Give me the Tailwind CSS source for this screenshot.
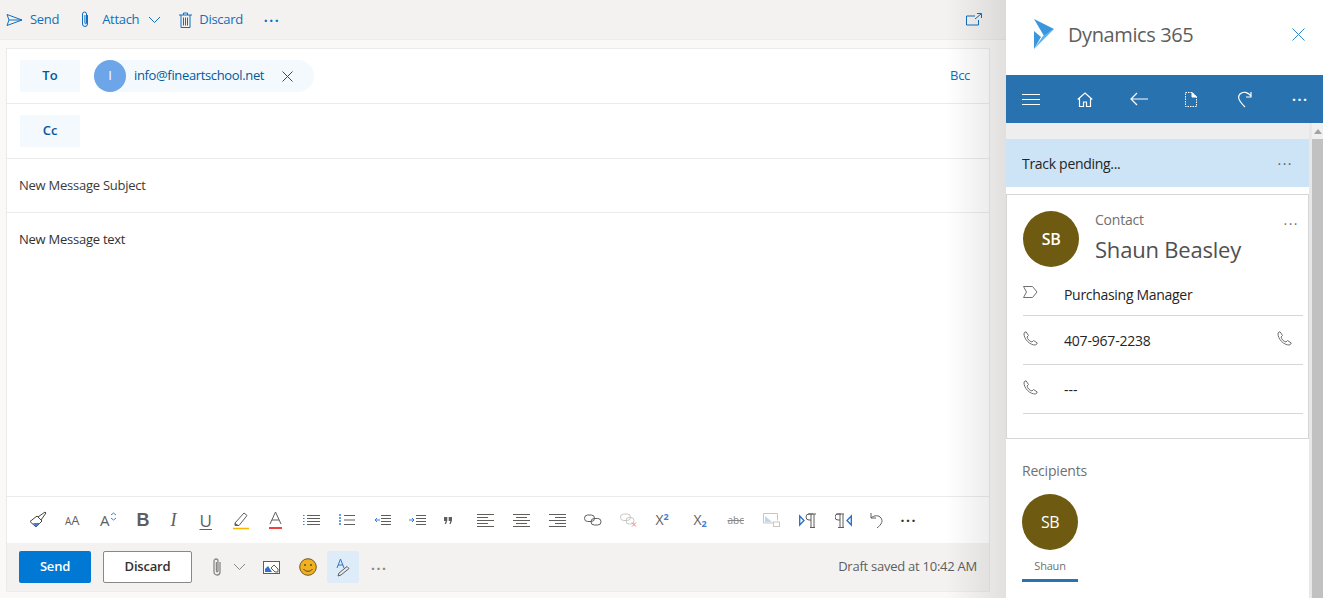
<!DOCTYPE html>
<html lang="en">
  <head>
    <meta charset="UTF-8" />
    <title>New Message</title>
    <script src="https://cdn.jsdelivr.net/npm/@tailwindcss/browser@4"></script>
  </head>
  <body class="h-[598px] overflow-hidden bg-white font-['Open_Sans',sans-serif] text-[13px] text-[#323130]">
    <div class="flex h-[598px]">
      <!-- compose pane -->
      <div class="relative w-[1006px] shrink-0 bg-[#faf9f8]">
        <div class="flex h-[40px] items-center border-b border-[#edebe9] bg-[#f3f2f1] pl-[6px] pr-[24px] text-[#106ebe]">
          <svg class="w-[17px] h-[14px]" viewBox="0 0 17 14" fill="none" stroke="#106ebe"><path d="M1 1.5 16 7 1 12.5 3 7ZM3 7h13"/></svg>
          <span class="ml-[7px] tracking-[-0.3px]">Send</span>
          <svg class="ml-[21px] w-[10px] h-[17px]" viewBox="0 0 10 17" fill="none" stroke="#106ebe"><path d="M7.5 4v9a2.5 2.5 0 0 1-5 0V3a2 2 0 0 1 4 0v9a.8.8 0 0 1-1.6 0V4"/></svg>
          <span class="ml-[12px] tracking-[-0.3px]">Attach</span>
          <svg class="ml-[9px] w-[13px] h-[8px]" viewBox="0 0 13 8" fill="none" stroke="#106ebe"><path d="m1 1 5.500 5.500L12 1"/></svg>
          <svg class="ml-[18px] w-[13px] h-[16px]" viewBox="0 0 13 16" fill="none" stroke="#106ebe"><path d="M0 3h13M4.500 3V1h4v2M2 3v12.500h9V3M4.500 5.500v8M6.500 5.500v8M8.500 5.500v8"/></svg>
          <span class="ml-[7px] tracking-[-0.3px]">Discard</span>
          <span class="ml-[21px] text-[14px] font-bold tracking-[1.5px] -mt-[6px]">...</span>
          <svg class="ml-auto w-[16px] h-[13px]" viewBox="0 0 16 13" fill="none" stroke="#106ebe"><path d="M9 3H.5v9h12V7"/><path d="M9 6l6-5M11 .5h4.500V5"/></svg>
        </div>

        <div class="ml-[6px] mt-[8px] w-[984px] border border-[#edebe9] bg-white">
          <div class="flex h-[55px] items-center border-b border-[#edebe9] pl-[13px] pr-[19px]">
            <div class="flex h-[32px] w-[60px] items-center justify-center rounded-[2px] bg-[#f3f9fd] font-semibold text-[#005a9e]">To</div>
            <div class="ml-[14px] flex h-[32px] w-[220px] items-center rounded-full bg-[#f3f9fd] text-[#005a9e]">
              <div class="flex h-[32px] w-[32px] items-center justify-center rounded-full bg-[#6ca5e8] text-white">I</div>
              <span class="ml-[8px] tracking-[-0.35px]">info@fineartschool.net</span>
              <svg class="ml-[18px] w-[11px] h-[11px]" viewBox="0 0 11 11" stroke="#005a9e"><path d="m.5.500 10 10M10.500.500l-10 10"/></svg>
            </div>
            <span class="ml-auto text-[#106ebe] tracking-[-0.3px]">Bcc</span>
          </div>
          <div class="flex h-[55px] items-center border-b border-[#edebe9] pl-[13px]">
            <div class="flex h-[32px] w-[60px] items-center justify-center rounded-[2px] bg-[#f3f9fd] font-semibold text-[#005a9e]">Cc</div>
          </div>
          <div class="flex h-[54px] items-center border-b border-[#edebe9] pl-[12px] tracking-[-0.25px] text-[#3b3a39]">New Message Subject</div>
          <div class="h-[283px] pl-[12px] pt-[17px] tracking-[-0.25px]">New Message text</div>

          <!-- format toolbar -->
          <div class="flex h-[47px] items-center border-t border-[#edebe9] pl-[22px] text-[#605e5c]">
            <svg class="w-[18px] h-[18px]" viewBox="0 0 18 18" fill="none" stroke="#444"><path d="M1 10.500 7 16l6-6-5-5Z"/><path d="M4 12h7l-4 4Z" fill="#3b7dd8" stroke="none"/><path d="m9 6 7-5 1 1-5 7"/></svg>
            <span class="ml-[18px] w-[16px] text-[10px] leading-none">A<span class="text-[13px]">A</span></span>
            <span class="ml-[19px] text-[15px] leading-none">A</span>
            <svg class="w-[7px] h-[9px] -mt-[8px]" viewBox="0 0 7 9" fill="none" stroke="#3b7dd8"><path d="m1 3 2.500-2L6 3M1 6l2.500 2L6 6"/></svg>
            <span class="ml-[20px] w-[12px] text-[18px] font-bold leading-none font-['Liberation_Sans']">B</span>
            <span class="ml-[22px] w-[12px] text-[18px] italic leading-none font-['Liberation_Serif']">I</span>
            <span class="ml-[17px] w-[12px] text-[17px] leading-none underline underline-offset-2">U</span>
            <svg class="ml-[20px] w-[17px] h-[19px]" viewBox="0 0 17 19" fill="none"><path d="M3 12 12 2l3 2.500-8 10H3Z" stroke="#605e5c"/><path d="M3 12l4 2.500H3Z" fill="#605e5c"/><path d="M1 17.500h16" stroke="#f7b500" stroke-width="1.500"/></svg>
            <svg class="ml-[20px] w-[13px] h-[18px]" viewBox="0 0 13 18" fill="none"><path d="m1 13 5.500-12L12 13M3 9h7" stroke="#605e5c"/><path d="M0 17h13" stroke="#e00" stroke-width="1.500"/></svg>
            <svg class="ml-[21px] w-[17px] h-[11px]" viewBox="0 0 17 11" stroke="#605e5c"><path d="M4 .500h13M4 3.500h13M4 6.500h13M4 9.500h13"/><path d="M0 .500h1.500M0 3.500h1.500M0 6.500h1.500M0 9.500h1.500" stroke="#3b7dd8"/></svg>
            <svg class="ml-[19px] w-[16px] h-[12px]" viewBox="0 0 16 12" stroke="#605e5c"><path d="M5 1.500h11M5 6h11M5 10.500h11"/><path d="M1 0v12" stroke="#3b7dd8" stroke-dasharray="2 1" stroke-width="1.500"/></svg>
            <svg class="ml-[19px] w-[17px] h-[10px]" viewBox="0 0 17 10" fill="none" stroke="#605e5c"><path d="M7 .500h10M7 3.500h10M7 6.500h10M7 9.500h10"/><path d="M6 5H1m2-2L1 5l2 2" stroke="#2f7fe0"/></svg>
            <svg class="ml-[18px] w-[17px] h-[10px]" viewBox="0 0 17 10" fill="none" stroke="#605e5c"><path d="M7 .500h10M7 3.500h10M7 6.500h10M7 9.500h10"/><path d="M0 5h5M3 3l2 2-2 2" stroke="#2f7fe0"/></svg>
            <svg class="ml-[18px] w-[8px] h-[7px]" viewBox="0 0 8 7" fill="#605e5c"><path d="M0 0h3.300v3.500L2 7H.7l1-3H0ZM4.700 0H8v3.500L6.700 7H5.400l1-3H4.700Z"/></svg>
            <svg class="ml-[25px] w-[17px] h-[13px]" viewBox="0 0 17 13" stroke="#605e5c"><path d="M0 .500h17M0 3.500h11M0 6.500h17M0 9.500h11M0 12.500h17"/></svg>
            <svg class="ml-[19px] w-[17px] h-[13px]" viewBox="0 0 17 13" stroke="#605e5c"><path d="M0 .500h17M3 3.500h11M0 6.500h17M3 9.500h11M0 12.500h17"/></svg>
            <svg class="ml-[19px] w-[17px] h-[13px]" viewBox="0 0 17 13" stroke="#605e5c"><path d="M0 .500h17M6 3.500h11M0 6.500h17M6 9.500h11M0 12.500h17"/></svg>
            <svg class="ml-[18px] w-[18px] h-[12px]" viewBox="0 0 18 12" fill="none" stroke="#605e5c"><rect x=".5" y="1" width="10" height="6.500" rx="3.200"/><rect x="7" y="4.500" width="10" height="6.500" rx="3.200"/></svg>
            <svg class="ml-[18px] w-[18px] h-[14px]" viewBox="0 0 18 14" fill="none" stroke="#c8c6c4"><rect x=".5" y="1" width="10" height="6.500" rx="3.200"/><rect x="6" y="4.500" width="8" height="6.500" rx="3.200"/><path d="m12 9.500 4 4M16 9.500l-4 4" stroke="#e8867f"/></svg>
            <span class="ml-[18px] w-[18px] text-[14px] leading-none">X<sup class="text-[9px] font-bold text-[#3b7dd8] -top-[5px]">2</sup></span>
            <span class="ml-[20px] w-[18px] text-[14px] leading-none">X<sub class="text-[9px] font-bold text-[#3b7dd8]">2</sub></span>
            <span class="ml-[16px] w-[16px] text-[10px] leading-none text-[#8a8886] line-through">abc</span>
            <svg class="ml-[19px] w-[17px] h-[14px]" viewBox="0 0 17 14" fill="none" stroke="#c8c6c4"><path d="M10 10H.5V.5h14v7"/><path d="M2 9V3l7 6Z" fill="#bcd7f0" stroke="none"/><rect x="10.500" y="9" width="6" height="4.500"/></svg>
            <svg class="ml-[19px] w-[17px] h-[15px]" viewBox="0 0 17 15" fill="none" stroke="#605e5c"><path d="M.7 3v9L5 7.500Z" stroke="#2f73c9" stroke-width="1.400"/><path d="M14 1H10a3 3 0 0 0 0 6h2M12 1v14M15 1v14M9 1h8M11 14.500h5"/></svg>
            <svg class="ml-[19px] w-[17px] h-[15px]" viewBox="0 0 17 15" fill="none" stroke="#605e5c"><path d="M16.300 3v9L12 7.500Z" stroke="#2f73c9" stroke-width="1.400"/><path d="M6 1H3a3 3 0 0 0 0 6h2M5 1v14M8 1v14M1 1h8M3 14.500h6"/></svg>
            <svg class="ml-[18px] w-[14px] h-[17px]" viewBox="0 0 14 17" fill="none" stroke="#605e5c"><path d="M1 1v5h5M1 6c3-3 8-3 10 0s1 6-4 10"/></svg>
            <span class="ml-[17px] text-[14px] font-bold tracking-[1.500px] -mt-[7px] text-[#323130]">...</span>
          </div>

          <!-- action bar -->
          <div class="flex h-[48px] items-center bg-[#f3f2f1] pl-[12px] pr-[12px]">
            <button class="h-[32px] w-[72px] rounded-[2px] bg-[#0078d4] font-semibold text-white tracking-[-0.2px]">Send</button>
            <button class="ml-[12px] h-[32px] w-[89px] rounded-[2px] border border-[#8a8886] bg-white font-semibold tracking-[-0.2px]">Discard</button>
            <svg class="ml-[20px] w-[10px] h-[18px]" viewBox="0 0 10 18" fill="none" stroke="#8a8886" stroke-width="1.300"><path d="M8 4v10a3 3 0 0 1-6 0V3a2 2 0 0 1 4 0v10a.8.8 0 0 1-1.600 0V4"/></svg>
            <svg class="ml-[11px] w-[13px] h-[8px]" viewBox="0 0 13 8" fill="none" stroke="#8a8886"><path d="m1 1 5.500 5.500L12 1"/></svg>
            <svg class="ml-[17px] w-[17px] h-[13px]" viewBox="0 0 17 13" fill="none"><rect x=".5" y=".5" width="16" height="12" fill="#fff" stroke="#605e5c"/><path d="M2 11V8l3-3 4 6Z" fill="#2f73c9"/><path d="M8 7l3-3 4 4v3h-3Z" fill="none" stroke="#605e5c"/></svg>
            <svg class="ml-[19px] w-[18px] h-[18px]" viewBox="0 0 18 18" fill="none"><circle cx="9" cy="9" r="8.300" fill="#f2b01e" stroke="#6b5a1e"/><circle cx="6" cy="7" r=".9" fill="#444"/><circle cx="12" cy="7" r=".9" fill="#444"/><path d="M4.500 11c2 3 7 3 9 0" stroke="#444"/></svg>
            <div class="ml-[10px] flex h-[32px] w-[32px] items-center justify-center rounded-[2px] bg-[#deecf9]">
              <svg class="w-[14px] h-[19px]" viewBox="0 0 14 19" fill="none"><path d="m1 10 3.500-9L8 10M2.200 7h4.800" stroke="#2f73c9"/><path d="M2 18l1-3 8-6.500 2 2L5 17Z" stroke="#605e5c"/></svg>
            </div>
            <span class="ml-[12px] text-[14px] font-bold tracking-[1.500px] -mt-[6px] text-[#8a8886]">...</span>
            <span class="ml-auto text-[#605e5c] tracking-[-0.25px]">Draft saved at 10:42 AM</span>
          </div>
        </div>
        <!-- panel shadow over the compose pane -->
        <div class="pointer-events-none absolute inset-y-0 right-0 w-[60px] bg-linear-to-r from-transparent to-black/10"></div>
      </div>

      <!-- dynamics pane -->
      <div class="flex w-[317px] shrink-0 flex-col bg-white">
        <div class="flex h-[75px] items-center pl-[28px] pr-[18px]">
          <svg class="w-[20px] h-[30px] -mt-[7px]" viewBox="0 0 20 30"><path d="M0 0 20 10 10 17Z" fill="#3a96dd"/><path d="M0 0v12l7 6-7 12Z" fill="#3a96dd"/><path d="M0 30 20 10 9 17Z" fill="#5cb0ec"/></svg>
          <span class="ml-[14px] text-[20px] tracking-[-0.4px] text-[#605e5c] -mt-[5px]">Dynamics 365</span>
          <svg class="ml-auto w-[13px] h-[13px] -mt-[7px]" viewBox="0 0 13 13" stroke="#2b88d8"><path d="m.5.500 12 12M12.500.500l-12 12"/></svg>
        </div>
        <div class="flex h-[48px] items-center bg-[#2872b0] pl-[16px] text-white">
          <svg class="w-[18px] h-[11px]" viewBox="0 0 18 11" stroke="#fff"><path d="M0 .500h18M0 5.500h18M0 10.500h18"/></svg>
          <svg class="ml-[37px] w-[16px] h-[15px]" viewBox="0 0 16 15" fill="none" stroke="#fff" stroke-width="1.200"><path d="M.7 7.500 8 1l7.300 6.500M2.500 6.500v8h4V10h3v4.500h4v-8"/></svg>
          <svg class="ml-[37px] w-[18px] h-[14px]" viewBox="0 0 18 14" fill="none" stroke="#fff" stroke-width="1.200"><path d="M18 7H1m6-6L1 7l6 6"/></svg>
          <svg class="ml-[37px] w-[12px] h-[15px]" viewBox="0 0 12 15" fill="none" stroke="#fff"><path d="M7 .500H.5v14h11V5Z" stroke-dasharray="1.500 1"/><path d="M7 .500 11.500 5H7Z" fill="#fff"/></svg>
          <svg class="ml-[41px] w-[14px] h-[17px]" viewBox="0 0 14 17" fill="none" stroke="#fff" stroke-width="1.200"><path d="M13 1v5H8M13 5C10 1 5 0 2 3s-1 7 5 13"/></svg>
          <span class="ml-[40px] text-[14px] font-bold tracking-[1.500px] -mt-[7px]">...</span>
        </div>
        <div class="flex min-h-0 flex-1">
          <div class="w-[303px] shrink-0">
            <div class="h-[16px] bg-[#eeeeee]"></div>
            <div class="flex h-[48px] items-center justify-between bg-[#cce4f6] pl-[16px] pr-[16px]">
              <span class="text-[14px] tracking-[-0.3px] text-[#252423]">Track pending...</span>
              <span class="text-[14px] tracking-[1.500px] -mt-[8px] text-[#605e5c]">...</span>
            </div>
            <div class="mt-[7px] h-[245px] border border-[#d6d6d6] pl-[16px] pr-[5px]">
              <div class="flex h-[78px] pt-[16px]">
                <div class="flex h-[56px] w-[56px] shrink-0 items-center justify-center rounded-full bg-[#6e5a10] text-[16px] font-semibold tracking-[-0.5px] text-white">SB</div>
                <div class="ml-[16px] flex-1">
                  <div class="flex justify-between text-[14px] tracking-[-0.2px] text-[#707070] leading-[18px]">Contact<span class="mr-[4px] tracking-[1.500px] -mt-[1px] mt-0">...</span></div>
                  <div class="mt-[5px] text-[22px] leading-[30px] tracking-[-0.2px] text-[#505050]">Shaun Beasley</div>
                </div>
              </div>
              <div class="flex h-[43px] items-center border-b border-[#d6d6d6]">
                <svg class="w-[15px] h-[12px] -mt-[4px]" viewBox="0 0 15 12" fill="none" stroke="#707070"><path d="M.5.500h9L14 6l-4.500 5.500H.5L3.500 6Z"/></svg>
                <span class="ml-[26px] text-[14px] tracking-[-0.3px] text-[#252423]">Purchasing Manager</span>
              </div>
              <div class="flex h-[49px] items-center border-b border-[#d6d6d6]">
                <svg class="w-[15px] h-[15px] -mt-[4px]" viewBox="0 0 15 15" fill="none" stroke="#707070"><path d="M1 2 3 .7l2.500 3.800L4 6c.5 2 2.500 4.500 5 5l1.500-1.500 3.800 2.500-1.500 2C7 14.500.500 8 1 2Z"/></svg>
                <span class="ml-[26px] text-[14px] tracking-[-0.2px] text-[#252423]">407-967-2238</span>
                <svg class="ml-auto mr-[11px] w-[15px] h-[15px] -mt-[4px]" viewBox="0 0 15 15" fill="none" stroke="#707070"><path d="M1 2 3 .7l2.500 3.800L4 6c.5 2 2.500 4.500 5 5l1.500-1.500 3.800 2.500-1.500 2C7 14.500.500 8 1 2Z"/></svg>
              </div>
              <div class="flex h-[49px] items-center border-b border-[#d6d6d6]">
                <svg class="w-[15px] h-[15px] -mt-[4px]" viewBox="0 0 15 15" fill="none" stroke="#707070"><path d="M1 2 3 .7l2.500 3.800L4 6c.5 2 2.500 4.500 5 5l1.500-1.500 3.800 2.500-1.500 2C7 14.500.500 8 1 2Z"/></svg>
                <span class="ml-[26px] text-[14px] text-[#252423]">---</span>
              </div>
            </div>
            <div class="pl-[16px] pt-[22px] text-[14px] tracking-[-0.2px] text-[#707070] leading-[20px]">Recipients</div>
            <div class="ml-[16px] mt-[13px] w-[56px]">
              <div class="flex h-[56px] w-[56px] items-center justify-center rounded-full bg-[#6e5a10] text-[16px] tracking-[-0.5px] text-white">SB</div>
              <div class="mt-[8px] text-center text-[11px] leading-[15px] tracking-[-0.2px] text-[#707070]">Shaun</div>
              <div class="mt-[6px] h-[3px] bg-[#2872b0]"></div>
            </div>
          </div>
          <div class="w-[3px] bg-[#e8e8e8]"></div>
          <!-- scrollbar -->
          <div class="flex w-[11px] flex-col bg-[#f0f0f0]">
            <div class="flex h-[16px] items-center justify-center">
              <div class="h-0 w-0 border-x-[4px] border-b-[5px] border-x-transparent border-b-[#a3a3a3]"></div>
            </div>
            <div class="flex-1 bg-[#c1c1c1]"></div>
          </div>
        </div>
      </div>
    </div>
  </body>
</html>
